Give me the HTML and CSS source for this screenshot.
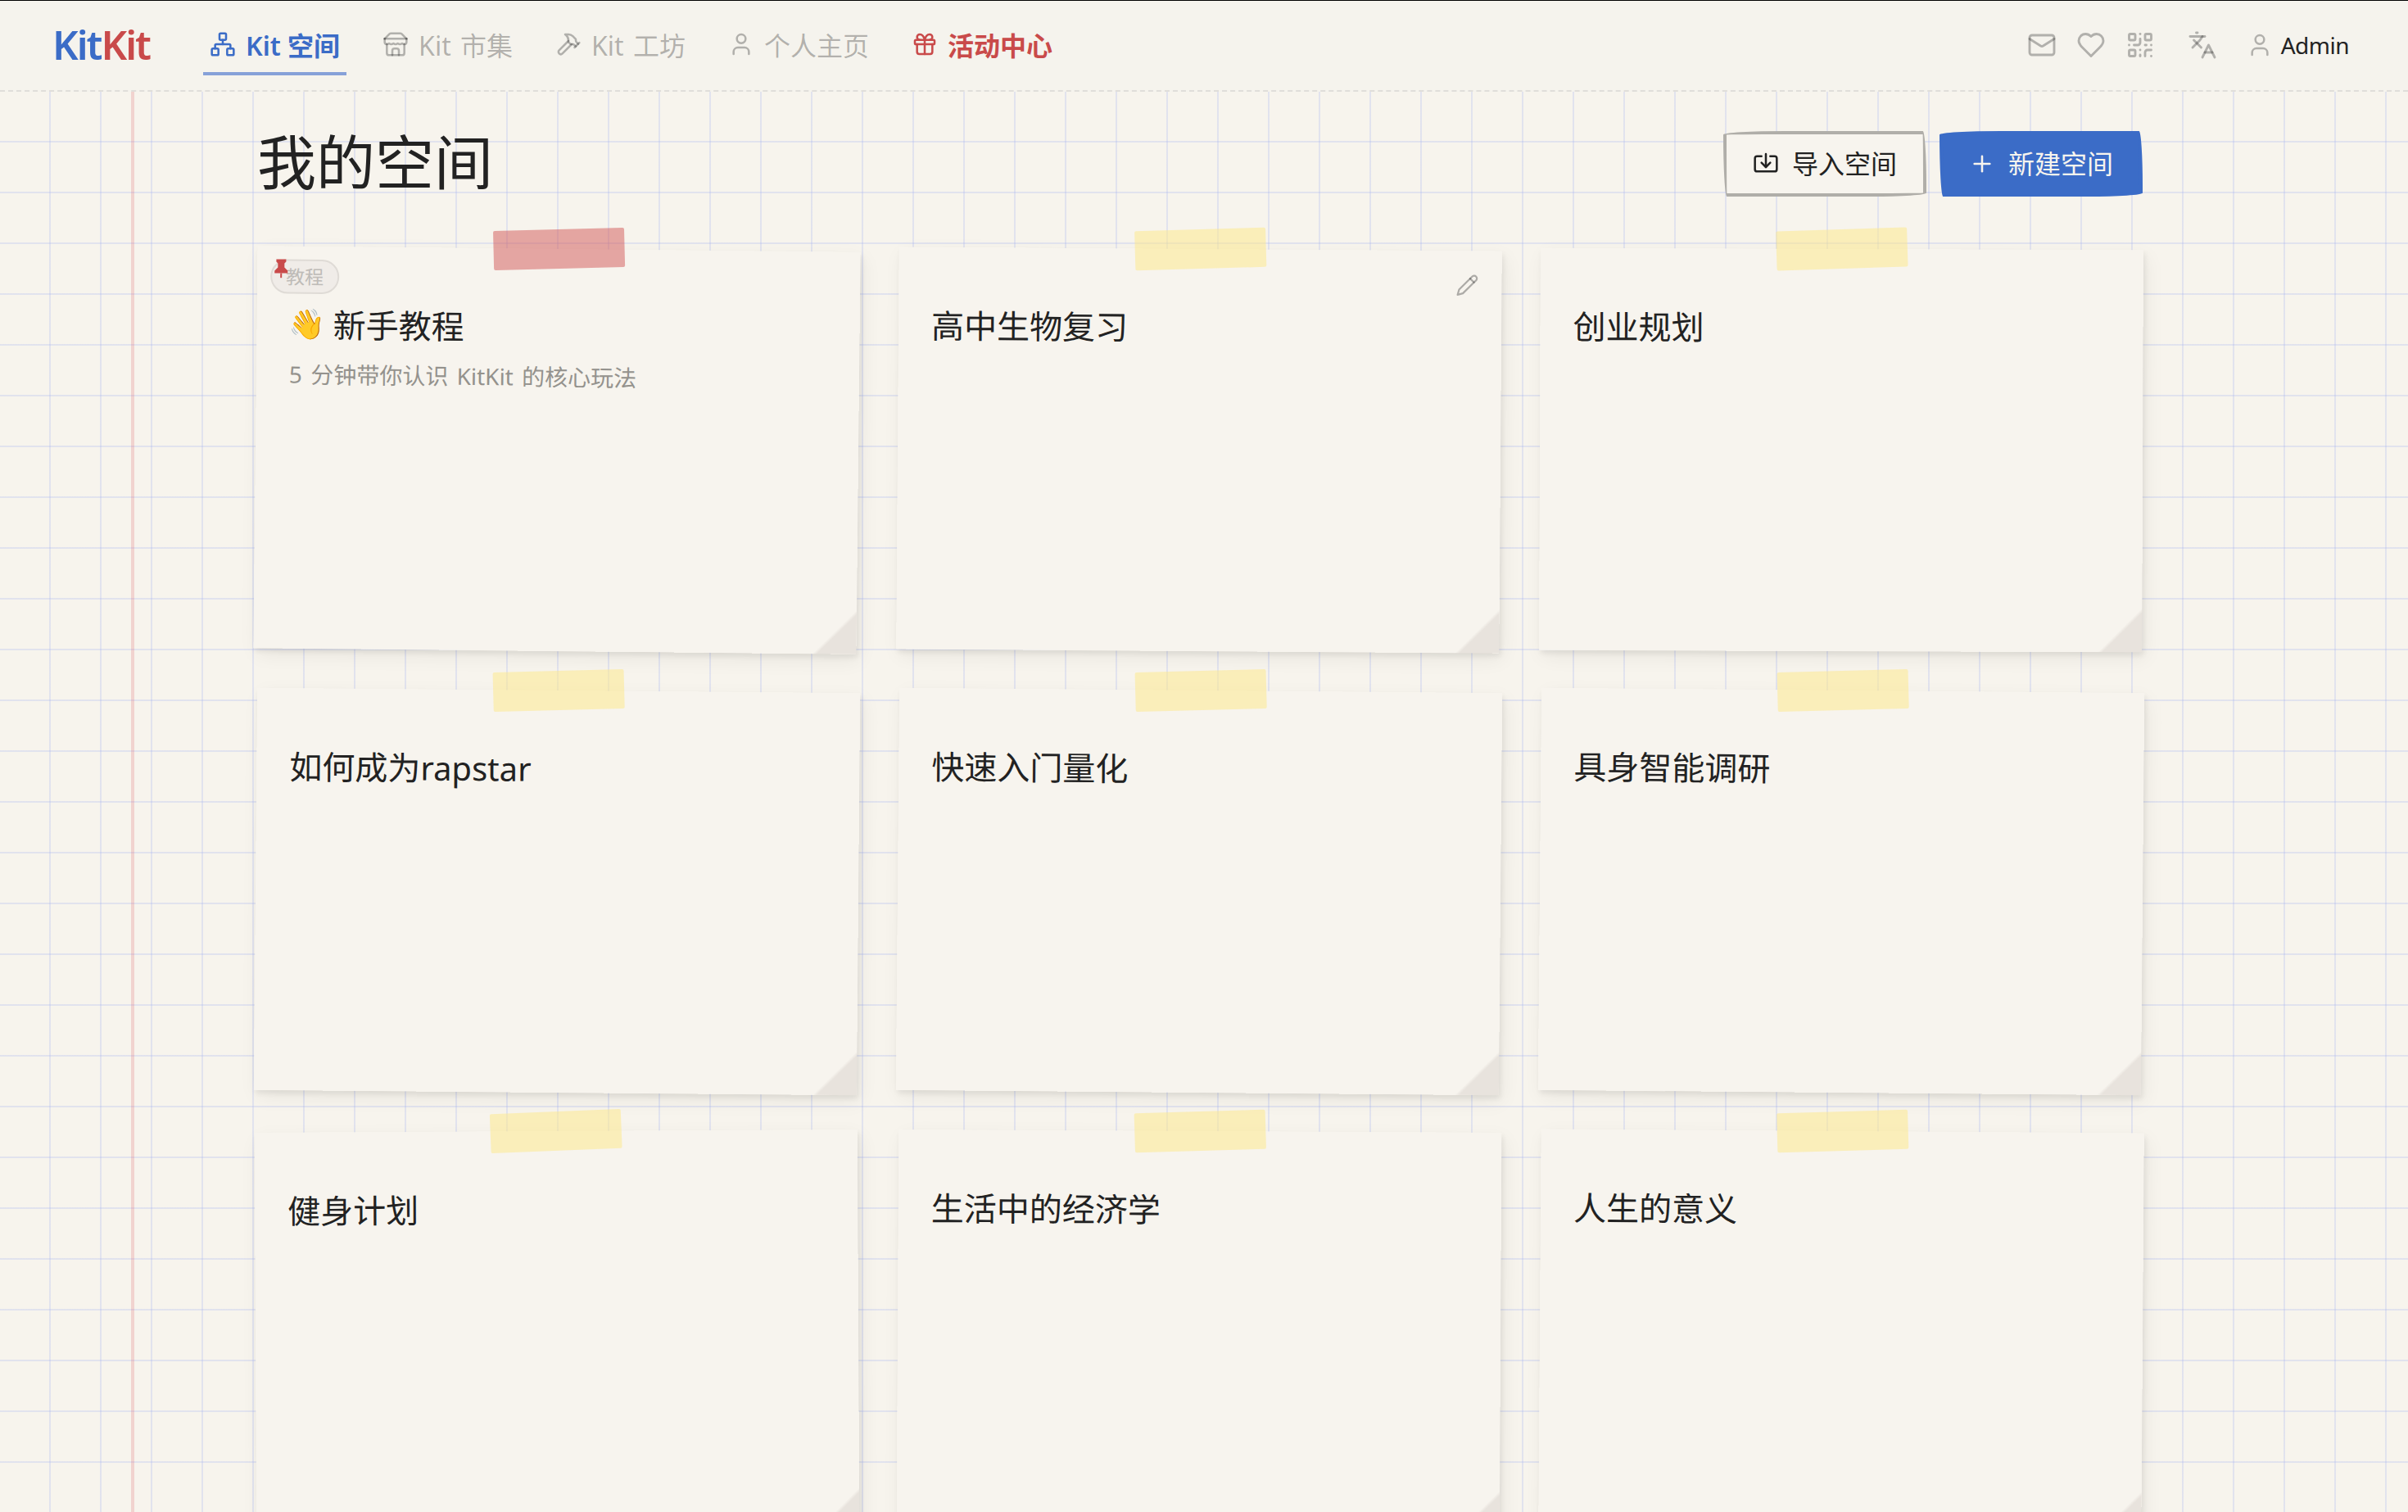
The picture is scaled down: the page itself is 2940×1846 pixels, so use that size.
FILE: index.html
```html
<!DOCTYPE html>
<html lang="zh-CN">
<head>
    <meta charset="UTF-8">
    <meta name="viewport" content="width=device-width, initial-scale=1.0">
    <title>KitKit - 我的空间</title>
    <link rel="stylesheet" href="styles.css">
</head>
<body>
    <header class="topbar">
        <a href="#" class="logo">Kit<span>Kit</span></a>
        <nav class="nav">
            <a href="#" class="nav-item active">
                <svg class="icon" viewBox="0 0 24 24"><rect x="16" y="16" width="6" height="6" rx="1"/><rect x="2" y="16" width="6" height="6" rx="1"/><rect x="9" y="2" width="6" height="6" rx="1"/><path d="M5 16v-3a1 1 0 0 1 1-1h12a1 1 0 0 1 1 1v3"/><path d="M12 12V8"/></svg>
                Kit 空间
            </a>
            <a href="#" class="nav-item">
                <svg class="icon" viewBox="0 0 24 24"><path d="m2 7 4.41-4.41A2 2 0 0 1 7.83 2h8.34a2 2 0 0 1 1.42.59L22 7"/><path d="M4 12v8a2 2 0 0 0 2 2h12a2 2 0 0 0 2-2v-8"/><path d="M15 22v-4a2 2 0 0 0-2-2h-2a2 2 0 0 0-2 2v4"/><path d="M2 7h20"/><path d="M22 7v3a2 2 0 0 1-2 2a2.7 2.7 0 0 1-1.59-.63.7.7 0 0 0-.82 0A2.7 2.7 0 0 1 16 12a2.7 2.7 0 0 1-1.59-.63.7.7 0 0 0-.82 0A2.7 2.7 0 0 1 12 12a2.7 2.7 0 0 1-1.59-.63.7.7 0 0 0-.82 0A2.7 2.7 0 0 1 8 12a2.7 2.7 0 0 1-1.59-.63.7.7 0 0 0-.82 0A2.7 2.7 0 0 1 4 12a2 2 0 0 1-2-2V7"/></svg>
                Kit 市集
            </a>
            <a href="#" class="nav-item">
                <svg class="icon" viewBox="0 0 24 24"><path d="m15 12-8.5 8.5c-.83.83-2.17.83-3 0a2.12 2.12 0 0 1 0-3L12 9"/><path d="M17.64 15 22 10.64"/><path d="m20.91 11.7-1.25-1.25c-.6-.6-.93-1.4-.93-2.25v-.86L16.01 4.6a5.56 5.56 0 0 0-3.94-1.64H9l.92.82A6.18 6.18 0 0 1 12 8.4v1.56l2 2h2.47l2.26 1.91"/></svg>
                Kit 工坊
            </a>
            <a href="#" class="nav-item">
                <svg class="icon" viewBox="0 0 24 24"><path d="M19 21v-2a4 4 0 0 0-4-4H9a4 4 0 0 0-4 4v2"/><circle cx="12" cy="7" r="4"/></svg>
                个人主页
            </a>
            <a href="#" class="nav-item event">
                <svg class="icon" viewBox="0 0 24 24"><rect x="3" y="8" width="18" height="4" rx="1"/><path d="M12 8v13"/><path d="M19 12v7a2 2 0 0 1-2 2H7a2 2 0 0 1-2-2v-7"/><path d="M7.5 8a2.5 2.5 0 0 1 0-5A4.8 8 0 0 1 12 8a4.8 8 0 0 1 4.5-5 2.5 2.5 0 0 1 0 5"/></svg>
                活动中心
            </a>
        </nav>
        <div class="tools">
            <svg class="icon" viewBox="0 0 24 24"><rect x="2" y="4" width="20" height="16" rx="2"/><path d="m22 7-8.97 5.7a1.94 1.94 0 0 1-2.06 0L2 7"/></svg>
            <svg class="icon" viewBox="0 0 24 24"><path d="M19 14c1.49-1.46 3-3.21 3-5.5A5.5 5.5 0 0 0 16.5 3c-1.76 0-3 .5-4.5 2-1.5-1.5-2.74-2-4.5-2A5.5 5.5 0 0 0 2 8.5c0 2.3 1.5 4.05 3 5.5l7 7Z"/></svg>
            <svg class="icon" viewBox="0 0 24 24"><rect x="3" y="3" width="5" height="5" rx="1"/><rect x="16" y="3" width="5" height="5" rx="1"/><rect x="3" y="16" width="5" height="5" rx="1"/><path d="M21 16h-3a2 2 0 0 0-2 2v3"/><path d="M21 21v.01"/><path d="M12 7v3a2 2 0 0 1-2 2H7"/><path d="M3 12h.01"/><path d="M12 3h.01"/><path d="M12 16v.01"/><path d="M16 12h1"/><path d="M21 12v.01"/><path d="M12 21v-1"/></svg>
            <svg class="icon lang" viewBox="0 0 24 24"><path d="m5 8 6 6"/><path d="m4 14 6-6 2-3"/><path d="M2 5h12"/><path d="M7 2h1"/><path d="m22 22-5-10-5 10"/><path d="M14 18h6"/></svg>
            <a href="#" class="user">
                <svg class="icon" viewBox="0 0 24 24"><path d="M19 21v-2a4 4 0 0 0-4-4H9a4 4 0 0 0-4 4v2"/><circle cx="12" cy="7" r="4"/></svg>
                Admin
            </a>
        </div>
    </header>

    <main class="paper">
        <div class="page-head">
            <h1>我的空间</h1>
            <div class="actions">
                <button class="btn">
                    <svg class="icon" viewBox="0 0 24 24"><path d="M12 3v12"/><path d="m8 11 4 4 4-4"/><path d="M8 5H4a2 2 0 0 0-2 2v10a2 2 0 0 0 2 2h16a2 2 0 0 0 2-2V7a2 2 0 0 0-2-2h-4"/></svg>
                    <span>导入空间</span>
                </button>
                <button class="btn primary">
                    <svg class="icon" viewBox="0 0 24 24"><path d="M5 12h14"/><path d="M12 5v14"/></svg>
                    <span>新建空间</span>
                </button>
            </div>
        </div>

        <div class="cards">
            <div class="card pinned">
                <span class="tag">教程</span>
                <svg class="pin" viewBox="0 0 18 24"><path d="M3 1h12v3l-2 2v5l4 4v3H1v-3l4-4V6L3 4z"/><path d="M8 18h2v6H8z"/></svg>
                <h2><span class="emoji">👋</span>新手教程</h2>
                <p>5 分钟带你认识 KitKit 的核心玩法</p>
            </div>
            <div class="card">
                <svg class="icon edit" viewBox="0 0 24 24"><path d="M17 3a2.85 2.83 0 1 1 4 4L7.5 20.5 2 22l1.5-5.5Z"/><path d="m15 5 4 4"/></svg>
                <h2>高中生物复习</h2>
            </div>
            <div class="card">
                <h2>创业规划</h2>
            </div>
            <div class="card">
                <h2>如何成为rapstar</h2>
            </div>
            <div class="card">
                <h2>快速入门量化</h2>
            </div>
            <div class="card">
                <h2>具身智能调研</h2>
            </div>
            <div class="card">
                <h2>健身计划</h2>
            </div>
            <div class="card">
                <h2>生活中的经济学</h2>
            </div>
            <div class="card">
                <h2>人生的意义</h2>
            </div>
        </div>
    </main>
</body>
</html>
```
FILE: styles.css
```css
* { box-sizing: border-box; }
body {
    margin: 0;
    height: 1846px;
    overflow: hidden;
    background: #f7f4ed;
    color: #222;
    font-family: "Noto Sans", "Noto Sans CJK SC", sans-serif;
    font-size: 32px;
}
a { color: inherit; text-decoration: none; }
.icon {
    flex: none;
    width: 32px;
    height: 32px;
    fill: none;
    stroke: currentColor;
    stroke-width: 1.9;
    stroke-linecap: round;
    stroke-linejoin: round;
}

/* 顶部导航 */
.topbar {
    display: flex;
    align-items: center;
    height: 112px;
    padding: 0 72px 0 64px;
    background: #f5f3ed;
    border-top: 1px solid #000;
    border-bottom: 2px dashed #e0deda;
}
.logo {
    width: 184px;
    padding-bottom: 4px;
    color: #3b6cc7;
    font-size: 49px;
    font-weight: 600;
    letter-spacing: -2px;
    line-height: 64px;
}
.logo span { color: #c94a4a; }
.nav { display: flex; gap: 36px; }
.nav-item {
    display: flex;
    align-items: center;
    gap: 12px;
    height: 73px;
    padding: 0 8px 3px;
    border-bottom: 4px solid transparent;
    border-top: 4px solid transparent;
    color: rgba(34, 34, 34, 0.32);
    white-space: nowrap;
    word-spacing: 3px;
}
.nav-item.active {
    color: #3b6cc7;
    border-bottom-color: #86a1d8;
    font-weight: 600;
    word-spacing: 0;
}
.nav-item.event { color: #c94a4a; font-weight: 700; }
.tools {
    display: flex;
    align-items: center;
    gap: 24px;
    margin-left: auto;
    padding-bottom: 2px;
    color: rgba(34, 34, 34, 0.32);
}
.tools > .icon { width: 36px; height: 36px; }
.tools > .lang { margin: 0 12px 0 16px; }
.user {
    display: flex;
    align-items: center;
    gap: 10px;
    color: #222;
    font-size: 28px;
    letter-spacing: -0.5px;
}
.user .icon { color: rgba(34, 34, 34, 0.32); }

/* 方格纸背景 */
.paper {
    position: relative;
    height: 1734px;
    padding: 48px 324px 0 312px;
    background-image:
        repeating-linear-gradient(to right, transparent 0 60px, rgba(160, 175, 240, 0.25) 60px 62px),
        repeating-linear-gradient(to bottom, transparent 0 60px, rgba(160, 175, 240, 0.25) 60px 62px);
}
.paper::before {
    content: "";
    position: absolute;
    top: 0;
    bottom: 0;
    left: 160px;
    width: 4px;
    background: rgba(220, 80, 90, 0.2);
}
.page-head {
    display: flex;
    justify-content: space-between;
    align-items: center;
    height: 80px;
}
h1 { margin: 0; padding: 0 0 6px 2px; font-size: 72px; font-weight: 400; line-height: 80px; }
.actions { display: flex; gap: 16px; }
.btn {
    display: flex;
    align-items: center;
    gap: 16px;
    height: 80px;
    padding: 0 32px;
    border: 4px solid #b0aea9;
    border-radius: 510px 30px 450px 30px / 30px 450px 30px 510px;
    background: #f7f4ee;
    color: #222;
    font: inherit;
}
.btn span { padding-bottom: 4px; }
.btn.primary { background: #3b6cc7; border-color: #3b6cc7; color: #f7f4ee; }

/* 空间卡片 */
.cards {
    display: grid;
    grid-template-columns: repeat(3, 736px);
    gap: 48px;
    margin-top: 64px;
}
.card {
    position: relative;
    aspect-ratio: 3 / 2;
    padding: 66px 40px;
    background: linear-gradient(315deg, #e8e3dd 34px, #f7f4ee 38px);
    box-shadow: 2px 4px 6px rgba(0, 0, 0, 0.07), 4px 8px 24px rgba(0, 0, 0, 0.06);
    transform: rotate(0.5deg);
}
.card:nth-child(1) { transform: rotate(0.6deg); }
.card:nth-child(2) { transform: rotate(0.4deg); }
.card:nth-child(3) { transform: rotate(0.2deg); }
.card:nth-child(7) { transform: rotate(-0.3deg); }
.card:nth-child(8) { transform: rotate(0.3deg); }
.card:nth-child(9) { transform: rotate(0.4deg); }
/* 胶带 */
.card::before {
    content: "";
    position: absolute;
    top: -24px;
    left: 288px;
    width: 160px;
    height: 48px;
    border-radius: 2px;
    background: rgba(253, 232, 138, 0.52);
    transform: rotate(-2deg);
}
.card.pinned::before { background: rgba(210, 85, 85, 0.5); }
.card h2 {
    display: flex;
    align-items: center;
    margin: 0;
    height: 60px;
    font-size: 40px;
    font-weight: 400;
    line-height: 60px;
}
.card p { margin: 10px 0 0; color: #94928d; font-size: 28px; line-height: 40px; word-spacing: 3px; }
.emoji { width: 54px; margin-left: -1px; font-family: "Noto Color Emoji", sans-serif; font-size: 36px; }
.tag {
    position: absolute;
    top: 16px;
    left: 16px;
    width: 84px;
    height: 42px;
    border: 2px solid #dfdbd6;
    border-radius: 21px;
    background: #f0ece8;
    color: #bebbb7;
    font-size: 23px;
    line-height: 38px;
    text-align: center;
}
.pin { position: absolute; top: 15px; left: 20px; width: 18px; height: 24px; fill: #c94a4a; }
.edit { position: absolute; top: 28px; right: 28px; width: 28px; height: 28px; color: rgba(34, 34, 34, 0.35); }
```
